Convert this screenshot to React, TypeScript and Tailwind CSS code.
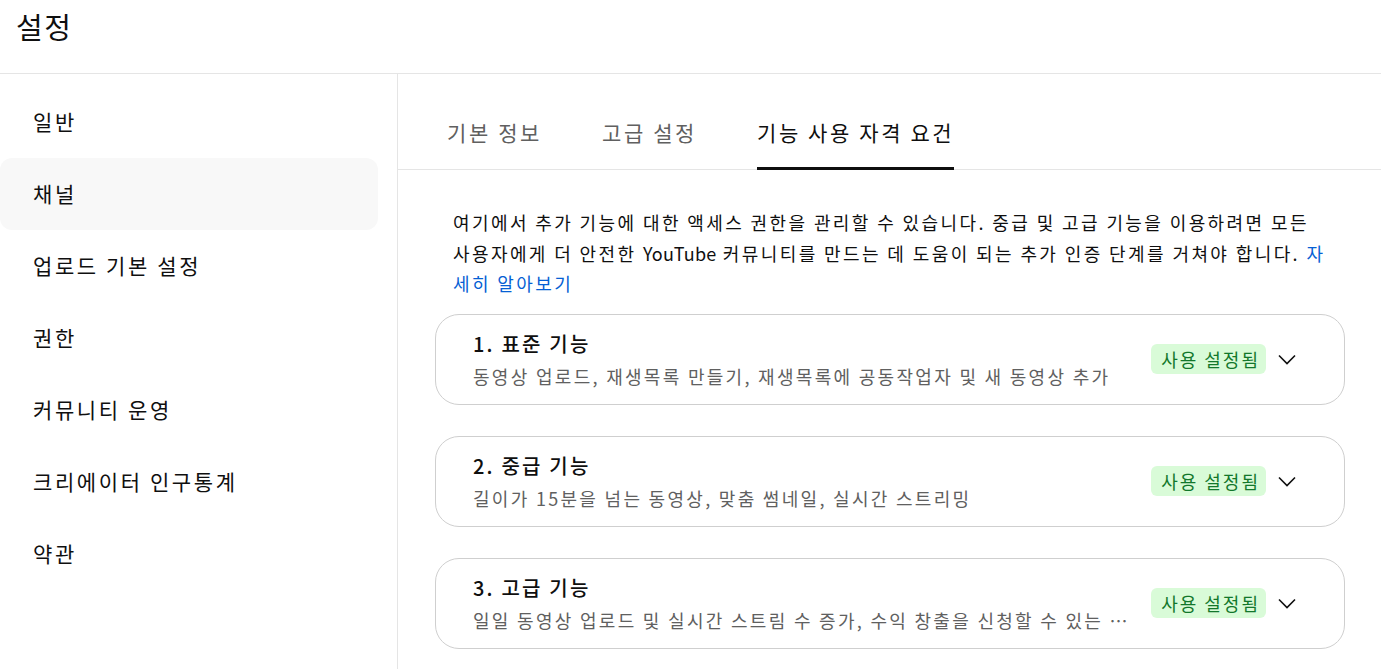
import React from 'react';

const NAV = ['일반', '채널', '업로드 기본 설정', '권한', '커뮤니티 운영', '크리에이터 인구통계', '약관'];
const TABS = ['기본 정보', '고급 설정', '기능 사용 자격 요건'];

const FEATURES = [
  { title: '1. 표준 기능', desc: '동영상 업로드, 재생목록 만들기, 재생목록에 공동작업자 및 새 동영상 추가' },
  { title: '2. 중급 기능', desc: '길이가 15분을 넘는 동영상, 맞춤 썸네일, 실시간 스트리밍' },
  { title: '3. 고급 기능', desc: '일일 동영상 업로드 및 실시간 스트림 수 증가, 수익 창출을 신청할 수 있는 자격 요건 충족 여부 확인' },
];

function Chevron() {
  return (
    <svg width="24" height="24" viewBox="0 0 24 24" fill="none" stroke="#0f0f0f" strokeWidth="1.6">
      <path d="M4 8.5l8 8 8-8" />
    </svg>
  );
}

export default function App() {
  return (
    <div className="h-[669px] w-[1381px] overflow-hidden bg-white text-[#0f0f0f]" style={{ fontFamily: '"Noto Sans CJK KR", "Noto Sans", sans-serif' }}>
      <header className="h-[74px] border-b border-[#e5e5e5] px-4 pt-[4px]">
        <h1 className="text-[29px] leading-[44px] font-normal tracking-[1.5px]">설정</h1>
      </header>

      <div className="flex h-[595px]">
        <nav className="w-[398px] shrink-0 border-r border-[#e5e5e5] pt-[12px] pr-[19px]">
          {NAV.map((item) => (
            <div
              key={item}
              className={`flex h-[72px] items-center rounded-xl pl-[33px] text-[21px] tracking-[2.6px] ${item === '채널' ? 'bg-[#f8f8f8]' : ''}`}
            >
              {item}
            </div>
          ))}
        </nav>

        <main className="flex-1 min-w-0">
          <div className="flex h-[96px] items-end gap-[60px] border-b border-[#e5e5e5] pl-[49px]">
            {TABS.map((tab, i) => (
              <div
                key={tab}
                className={`-mb-px pb-[20px] text-[21px] leading-[30px] tracking-[2.6px] ${i === 2 ? 'border-b-[3px] border-[#0f0f0f] text-[#0f0f0f]' : 'border-b-[3px] border-transparent text-[#606060]'}`}
              >
                {tab}
              </div>
            ))}
          </div>

          <p className="mt-[37px] pl-[55px] pr-[45px] text-[18px] leading-[30.5px] tracking-[2.4px] text-[#0f0f0f]">
            여기에서 추가 기능에 대한 액세스 권한을 관리할 수 있습니다. 중급 및 고급 기능을 이용하려면 모든
            <br />
            사용자에게 더 안전한 <span className="tracking-[0.2px]">YouTube</span> 커뮤니티를 만드는 데 도움이 되는 추가 인증 단계를 거쳐야 합니다.{' '}
            <a className="text-[#065fd4]">자세히 알아보기</a>
          </p>

          <div className="mt-[15px] flex flex-col gap-[31px] pl-[37px] pr-[36px]">
            {FEATURES.map((f) => (
              <div key={f.title} className="flex h-[91px] items-center rounded-[24px] border border-[#cfcfcf] pl-[37px] pr-[45px]">
                <div className="min-w-0 flex-1">
                  <div className="text-[20px] leading-[28px] font-medium tracking-[2.2px]">{f.title}</div>
                  <div className="mt-[6px] truncate pr-[14px] text-[18px] leading-[24px] tracking-[2.3px] text-[#606060]">{f.desc}</div>
                </div>
                <span className="rounded-[6px] bg-[#d9fbd8] pl-[10px] pr-[6px] text-[18px] leading-[30px] tracking-[2px] text-[#12772b]">사용 설정됨</span>
                <span className="ml-[9px]">
                  <Chevron />
                </span>
              </div>
            ))}
          </div>
        </main>
      </div>
    </div>
  );
}
